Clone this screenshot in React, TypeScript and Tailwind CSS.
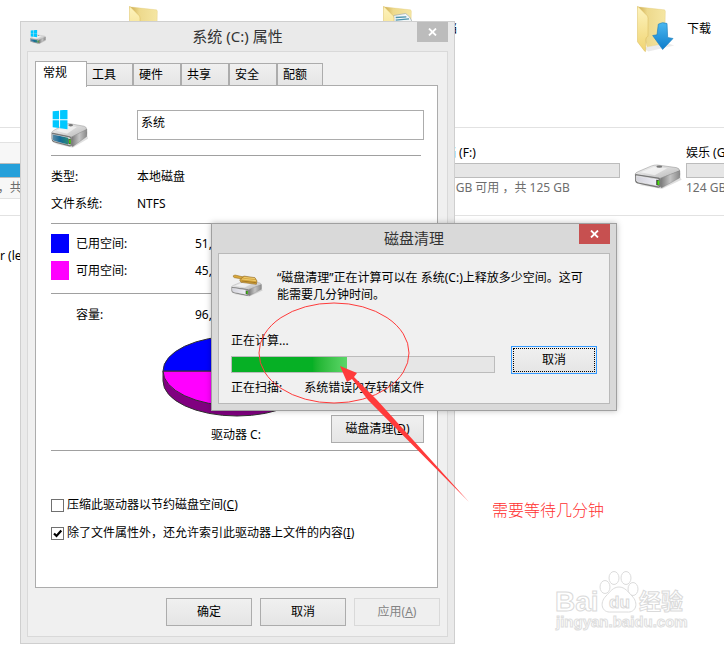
import React from "react";

const tabs = ["常规", "工具", "硬件", "共享", "安全", "配额"];

function DriveShape() {
  return (
    <g>
      <path d="M14 64 L84 76 L144 48 L136 34 Z" fill="#000" opacity=".12" />
      <path d="M2 31 Q3 27 12 23 L52 6 Q60 3 70 3 L128 11 Q138 13 138 22 L84 42 Q78 45 70 43 L8 34 Z" fill="url(#driveTop)" stroke="#8c8c8c" strokeWidth="1.5" />
      <path d="M20 25 L60 9 L100 13 L62 34 Z" fill="#fff" opacity=".55" />
      <ellipse cx="76" cy="8" rx="9" ry="3.5" fill="#777" />
      <path d="M79 44 L138 20 Q140 30 138 42 L86 71 Q80 74 79 68 Z" fill="url(#driveSide)" stroke="#6d6d6d" strokeWidth="1" />
      <path d="M2 32 Q3 30 8 31 L72 41 Q80 42 80 50 L80 66 Q80 73 72 72 L10 59 Q2 57 2 48 Z" fill="#777" />
      <path d="M6 36 L70 46 Q75 47 75 52 L75 67 L12 55 Q6 53 6 47 Z" fill="url(#driveFront)" stroke="#f4f4f4" strokeWidth="2" />
      <path d="M67 48 L76 50 L76 66 L67 64 Z" fill="#222" />
      <path d="M70 50 L76 51 L76 64 L70 63 Z" fill="#4be010" />
    </g>
  );
}

function Gradients() {
  return (
    <svg className="absolute h-0 w-0" aria-hidden="true">
      <defs>
        <linearGradient id="driveTop" x1="0" y1="0" x2="1" y2="1">
          <stop offset="0" stopColor="#f8f8f8" />
          <stop offset=".6" stopColor="#d2d2d2" />
          <stop offset="1" stopColor="#b4b4b4" />
        </linearGradient>
        <linearGradient id="driveSide" x1="0" y1="0" x2="1" y2="0">
          <stop offset="0" stopColor="#777" />
          <stop offset=".5" stopColor="#c4c4c4" />
          <stop offset="1" stopColor="#888" />
        </linearGradient>
        <linearGradient id="driveFront" x1="0" y1="0" x2="1" y2="0">
          <stop offset="0" stopColor="#d4d4dc" />
          <stop offset="1" stopColor="#f0f0f8" />
        </linearGradient>
        <linearGradient id="driveBlue" x1="0" y1="0" x2="1" y2="0">
          <stop offset="0" stopColor="#5e8ba4" />
          <stop offset=".5" stopColor="#146a98" />
          <stop offset="1" stopColor="#2b8a78" />
        </linearGradient>
        <linearGradient id="folderFront" x1="0" y1="0" x2="0" y2="1">
          <stop offset="0" stopColor="#fdf3bd" />
          <stop offset="1" stopColor="#f0d472" />
        </linearGradient>
        <linearGradient id="folderBack" x1="0" y1="0" x2="1" y2="0">
          <stop offset="0" stopColor="#c9a648" />
          <stop offset=".35" stopColor="#edd98c" />
          <stop offset="1" stopColor="#f5e6a3" />
        </linearGradient>
        <linearGradient id="downArrow" x1="0" y1="0" x2="0" y2="1">
          <stop offset="0" stopColor="#4bb8f0" />
          <stop offset="1" stopColor="#0d7ccb" />
        </linearGradient>
      </defs>
    </svg>
  );
}

function DriveIcon() {
  return (
    <svg viewBox="0 0 144 76" className="h-[25px] w-12 shrink-0" aria-hidden="true">
      <DriveShape />
    </svg>
  );
}

function SystemDriveIcon({ className }: { className: string }) {
  return (
    <svg viewBox="0 0 110 112" preserveAspectRatio="none" className={className} aria-hidden="true">
      <g transform="translate(0 37) scale(.77 .98)">
        <DriveShape />
        <path d="M6 36 L66 46 L66 66 L12 55 Q6 53 6 47 Z" fill="url(#driveBlue)" />
      </g>
      <path d="M5 4 L24 2 V27 H5 Z M27 1 L49 -1 V27 H27 Z M5 30 H24 V53 L5 51 Z M27 30 H49 V57 L27 54 Z" fill="#00c8ff" />
    </svg>
  );
}

function CleanupIcon() {
  return (
    <svg viewBox="0 0 96 70" className="h-6 w-8 shrink-0" aria-hidden="true">
      <g transform="translate(0 18) scale(.66 .64)">
        <DriveShape />
      </g>
      <path d="M7 4 Q6 9 10 10 L34 14 L38 8 L12 2 Z" fill="#d9a73c" stroke="#8c6414" strokeWidth="1.5" />
      <path d="M38 5 L72 10 L78 20 L76 30 L30 24 L26 17 Z" fill="#d5a53c" stroke="#80570f" strokeWidth="1.5" />
      <path d="M38 9 L72 13 M33 14 L75 19" stroke="#f7dc8a" strokeWidth="2" />
      <path d="M32 20 L75 25" stroke="#76500f" strokeWidth="1.5" />
    </svg>
  );
}

function FolderIcon({ kind }: { kind: "plain" | "papers" | "download" }) {
  return (
    <svg viewBox="0 0 120 140" className="h-[47px] w-10 shrink-0" aria-hidden="true">
      <path d="M20 125 L84 108 L112 118 L34 136 Z" fill="#000" opacity=".08" />
      <path d="M1 2 L82 11 Q85 12 85 16 L83 112 L30 122 Z" fill="url(#folderBack)" stroke="#e2c875" strokeWidth="1" />
      {kind === "papers" && (
        <g>
          <path d="M32 28 L68 22 Q82 30 88 48 L88 100 L32 110 Z" fill="#f3f7f8" stroke="#9aa9ae" strokeWidth="2" />
          <path d="M38 34 L70 32 M38 42 L78 38" stroke="#4b94ad" strokeWidth="4" />
        </g>
      )}
      <path d="M1 3 Q1 0 4 2 L30 28 Q33 31 33 36 L33 90 Q26 94 26 100 L26 134 Q26 138 23 135 L3 109 Q1 107 1 104 Z" fill="url(#folderFront)" stroke="#d9ba5f" strokeWidth="1.5" />
      {kind === "download" && (
        <path d="M64 54 Q76 46 90 52 L92 94 L108 97 L77 130 L47 88 L60 86 Z" fill="url(#downArrow)" stroke="#1c7fbd" strokeWidth="2" />
      )}
    </svg>
  );
}

function Folder({ kind, name }: { kind: "plain" | "papers" | "download"; name?: string }) {
  return (
    <div className="flex items-start gap-[10px]">
      <FolderIcon kind={kind} />
      <span className="pt-[15px]">{name}</span>
    </div>
  );
}

function Volume({ name, free, active }: { name: string; free: string; active?: boolean }) {
  return (
    <div className={`flex h-[57px] items-center border-y ${active ? "border-[#e2e2e2] bg-[#f7f7f7]" : "border-transparent"}`}>
      <div className="-ml-[3px] w-[52px] pt-3"><DriveIcon /></div>
      <div className="flex w-[188px] flex-col whitespace-nowrap">
        <span className="leading-[18px]">{name}</span>
        <div className={`mt-px h-[15px] border border-[#bcbcbc] ${active ? "bg-[#26a0da]" : "bg-[#e6e6e6]"}`} />
        <span className="pt-px leading-[18px] text-[#6d6d6d]">{free}</span>
      </div>
    </div>
  );
}

function Explorer() {
  return (
    <div className="-ml-[125px] w-[1016px]">
      <section className="grid h-[128px] grid-cols-4 border-b border-[#e2e2e2] pt-[6px]">
        <span />
        <Folder kind="plain" />
        <Folder kind="papers" name="文档" />
        <Folder kind="download" name="下载" />
      </section>
      <section className="grid h-[88px] grid-cols-4 border-b border-[#e2e2e2] pt-[14px]">
        <Volume name="系统 (C:)" free="45.4 GB 可用 ，共" active />
        <span />
        <Volume name="文档 (F:)" free="124 GB 可用 ，共 125 GB" />
        <Volume name="娱乐 (G:)" free="124 GB 可用" />
      </section>
      <p className="pt-8 pl-[125px]">r (le</p>
    </div>
  );
}

function CloseButton({ tone }: { tone: string }) {
  return (
    <button aria-label="关闭" className={`absolute top-0 right-[6px] flex h-5 w-[31px] items-center justify-center ${tone}`}>
      <svg viewBox="0 0 9 8" className="h-2 w-[9px]" aria-hidden="true">
        <path d="M1 .5 L8 7.5 M8 .5 L1 7.5" stroke="#fff" strokeWidth="1.8" />
      </svg>
    </button>
  );
}

function PushButton({
  children,
  width = "w-[86px]",
  disabled,
}: {
  children: React.ReactNode;
  width?: string;
  disabled?: boolean;
}) {
  return (
    <button
      disabled={disabled}
      className={`h-7 border ${width} ${disabled ? "border-[#d9d9d9] bg-[#efefef] text-[#838383]" : "border-[#acacac] bg-linear-to-b from-[#f0f0f0] to-[#e5e5e5]"}`}
    >
      {children}
    </button>
  );
}

function Check({ checked, children }: { checked?: boolean; children: React.ReactNode }) {
  return (
    <label className="flex h-7 items-center gap-[3px] whitespace-nowrap">
      <span className="grid">
        <input type="checkbox" defaultChecked={checked} className="peer col-start-1 row-start-1 h-[13px] w-[13px] appearance-none border border-[#707070] bg-white" />
        <svg viewBox="0 0 13 13" className="pointer-events-none invisible col-start-1 row-start-1 h-[13px] w-[13px] peer-checked:visible" aria-hidden="true">
          <path d="M3 6.5 L5.5 9 L10.3 3.5" fill="none" stroke="#000" strokeWidth="2.2" />
        </svg>
      </span>
      <span>{children}</span>
    </label>
  );
}

function SpaceRow({ swatch, label, value }: { swatch: string; label: string; value: string }) {
  return (
    <div className="flex h-[27px] items-center">
      <span className={`mr-[7px] h-[19px] w-[18px] ${swatch}`} />
      <span className="w-[119px]">{label}</span>
      <span>{value}</span>
    </div>
  );
}

function UsagePie() {
  return (
    <svg viewBox="0 0 150 82" className="h-[82px] w-[150px]" role="img" aria-label="驱动器使用情况">
      <path d="M1 36 V46 A74 35 0 0 0 149 46 V36 Z" fill="#800080" stroke="#303030" strokeWidth="1" />
      <path d="M1 36 A74 35 0 0 0 149 36 Z" fill="#f0f" stroke="#303030" strokeWidth="1" />
      <path d="M1 36 A74 35 0 0 1 149 36 Z" fill="#00f" stroke="#303030" strokeWidth="1" />
    </svg>
  );
}

function PropertiesWindow() {
  return (
    <section className="absolute top-[21px] left-5 w-[435px] border border-[#cfcfcf] bg-[#eaeaea] px-[6px] pb-[6px]">
      <header className="flex h-[29px] items-center">
        <SystemDriveIcon className="ml-[3px] h-[14px] w-4" />
        <h1 className="flex-1 pr-[19px] pb-[2px] text-center text-[15px] text-[#333]">系统 (C:) 属性</h1>
        <CloseButton tone="bg-[#bcbcbc]" />
      </header>
      <div className="border border-[#d9d9d9] bg-[#f0f0f0] px-[7px] pt-[9px] pb-[10px]">
        <div role="tablist" className="flex h-6 items-end">
          {tabs.map((tab, i) => (
            <button
              key={tab}
              role="tab"
              aria-selected={i === 0}
              className={
                i === 0
                  ? "relative -mb-[2px] h-[26px] w-[52px] border border-b-0 border-[#acacac] bg-white pr-3 pb-1"
                  : `h-[22px] border border-b-0 border-[#acacac] bg-linear-to-b from-[#f0f0f0] to-[#e5e5e5] pl-[5px] text-left ${i === 5 ? "w-[46px]" : i === 1 ? "w-[46px] border-l-0" : "w-12"}`
              }
            >
              {tab}
            </button>
          ))}
        </div>
        <div className="w-[403px] border border-[#acacac] bg-white pr-[13px] pb-10 pl-[15px]">
          <div className="flex items-start pt-6">
            <SystemDriveIcon className="h-[38px] w-[37px]" />
            <input aria-label="卷标" defaultValue="系统" className="ml-[49px] h-[30px] min-w-0 flex-1 border border-[#acacac] px-[3px] pb-[6px] outline-none" />
          </div>
          <div className="mt-[7px] mr-[3px] border-y border-[#a0a0a0] pt-[7px] pb-[6px]">
            <dl className="grid grid-cols-[86px_1fr] leading-[27px]">
              <dt>类型:</dt>
              <dd>本地磁盘</dd>
              <dt>文件系统:</dt>
              <dd>NTFS</dd>
            </dl>
          </div>
          <div className="mr-[3px] border-b border-[#a0a0a0] pt-[6px] pb-[9px]">
            <SpaceRow swatch="bg-[#0000ff]" label="已用空间:" value="51," />
            <SpaceRow swatch="bg-[#ff00ff]" label="可用空间:" value="45," />
          </div>
          <div className="pt-[7px]">
            <SpaceRow swatch="" label="容量:" value="96," />
          </div>
          <div className="mr-[3px] flex h-[123px] flex-col border-b border-[#a0a0a0] pt-[7px] pl-[111px]">
            <UsagePie />
            <div className="-mt-[2px] flex items-start justify-between">
              <span className="pt-3 pl-[49px]">驱动器 C:</span>
              <div className="-mr-[3px]">
                <PushButton width="w-[93px]">磁盘清理(<u>D</u>)</PushButton>
              </div>
            </div>
          </div>
          <div className="pt-10">
            <Check>压缩此驱动器以节约磁盘空间(<u>C</u>)</Check>
            <Check checked>除了文件属性外，还允许索引此驱动器上文件的内容(<u>I</u>)</Check>
          </div>
        </div>
        <footer className="flex justify-end gap-2 pt-[10px]">
          <PushButton>确定</PushButton>
          <PushButton>取消</PushButton>
          <PushButton disabled>应用(<u>A</u>)</PushButton>
        </footer>
      </div>
    </section>
  );
}

function CleanupDialog() {
  return (
    <section role="dialog" aria-label="磁盘清理" className="absolute top-[223px] left-[211px] w-[406px] border border-[#a0a0a0] bg-[#d9d9d9] px-[6px] pb-[6px] shadow-[0_0_6px_rgba(0,0,0,0.25)]">
      <header className="flex h-[29px] items-center justify-center">
        <h2 className="pb-[2px] text-[15px] text-[#333]">磁盘清理</h2>
        <CloseButton tone="bg-[#c75050]" />
      </header>
      <div className="border border-[#b9b9b9] bg-[#f0f0f0] px-3 pb-[6px]">
        <div className="flex gap-[14px] pt-[15px]">
          <div className="pt-[5px]"><CleanupIcon /></div>
          <p className="leading-[17px] whitespace-nowrap">
            “磁盘清理”正在计算可以在 系统(C:)上释放多少空间。这可
            <br />
            能需要几分钟时间。
          </p>
        </div>
        <div className="flex items-center justify-between pt-[29px]">
          <div className="w-[264px]">
            <p className="leading-[18px]">正在计算...</p>
            <div role="progressbar" aria-label="正在计算" aria-valuenow={44} className="my-[6px] h-[17px] border border-[#bcbcbc] bg-[#e6e6e6]">
              <div className="h-full w-[44%] bg-linear-to-r from-[#06b025] from-70% to-[#5bd769]" />
            </div>
            <p className="flex gap-[22px] leading-[18px]">
              <span>正在扫描:</span>
              <span>系统错误内存转储文件</span>
            </p>
          </div>
          <button className="mb-[10px] h-7 w-[86px] border border-[#3399ff] bg-linear-to-b from-[#f0f0f0] to-[#e5e5e5] p-px">
            <span className="flex h-full items-center justify-center border border-dotted border-black">取消</span>
          </button>
        </div>
      </div>
    </section>
  );
}

function Annotation() {
  return (
    <>
      <svg viewBox="0 0 220 210" className="pointer-events-none absolute top-[300px] left-[255px] h-[210px] w-[220px]" aria-hidden="true">
        <ellipse cx="79" cy="53" rx="75" ry="50" fill="none" stroke="#ff3b3b" strokeWidth="1" />
        <path d="M85 66 L102 73 L99 77 L122 100 L214 202 L113 100 L97 79 L92 82 Z" fill="#ff3b3b" />
      </svg>
      <p className="absolute top-[499px] left-[492px] text-[16px] leading-[22px] font-light text-[#ff3030]">需要等待几分钟</p>
    </>
  );
}

function Watermark() {
  return (
    <svg viewBox="0 0 140 80" className="pointer-events-none absolute top-[560px] left-[550px] h-20 w-[140px]" role="img" aria-label="Baidu 经验">
      <g fill="#fff" stroke="#dcdcdc" strokeWidth="1">
        <ellipse cx="55" cy="27" rx="5" ry="6.5" />
        <ellipse cx="64" cy="18" rx="5" ry="6.5" />
        <ellipse cx="76" cy="18" rx="5" ry="6.5" />
        <ellipse cx="83" cy="29" rx="5" ry="6.5" />
        <path d="M69 27 C75 27 78 32 82 36 C89 43 86 53 77 52 H61 C52 53 49 43 56 36 C60 32 63 27 69 27 Z" />
      </g>
      <g className="font-['Liberation_Sans','Noto_Sans_CJK_SC',sans-serif] font-bold" fill="#fff" stroke="#dadada" strokeWidth="1">
        <text x="5" y="51" fontSize="28">Bai</text>
        <text x="59" y="48" fontSize="17">du</text>
        <text x="89" y="49" fontSize="22">经验</text>
      </g>
      <text x="6" y="67" fontSize="15" className="font-['Liberation_Sans',sans-serif] font-bold" fill="#fff" stroke="#dedede" strokeWidth="1">
        jingyan.baidu.com
      </text>
    </svg>
  );
}

export default function App() {
  return (
    <main className="relative min-h-screen w-full overflow-hidden bg-white font-['Noto_Sans','Noto_Sans_CJK_SC',sans-serif] text-xs text-black">
      <Gradients />
      <Explorer />
      <PropertiesWindow />
      <CleanupDialog />
      <Annotation />
      <Watermark />
    </main>
  );
}
